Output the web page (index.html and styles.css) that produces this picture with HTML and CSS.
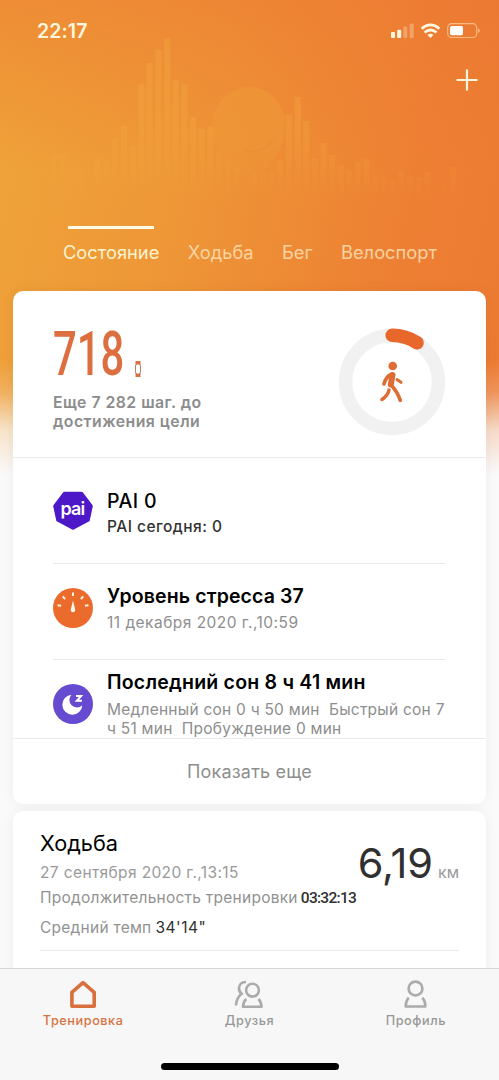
FILE: index.html
```html
<!DOCTYPE html>
<html lang="ru">
<head>
<meta charset="utf-8">
<title>Тренировка</title>
<link rel="stylesheet" href="styles.css">
</head>
<body>
<div class="app">
  <svg class="wave" width="499" height="291" viewBox="0 0 499 291" aria-hidden="true">
    <defs>
      <linearGradient id="fade" gradientUnits="userSpaceOnUse" x1="0" y1="36" x2="0" y2="198">
        <stop offset="0" stop-color="#f2a83e" stop-opacity=".42"/>
        <stop offset=".6" stop-color="#f2a83e" stop-opacity=".34"/>
        <stop offset="1" stop-color="#f2a83e" stop-opacity="0"/>
      </linearGradient>
      <linearGradient id="disc" x1="0" y1="0" x2="0" y2="1">
        <stop offset="0" stop-color="#ee9a37" stop-opacity=".55"/>
        <stop offset=".55" stop-color="#ee9a37" stop-opacity=".5"/>
        <stop offset="1" stop-color="#ee9a37" stop-opacity="0"/>
      </linearGradient>
    </defs>
    <path d="M213 123a36 36 0 0 1 72 0c0 25-12 44-36 62-24-18-36-37-36-62z" fill="url(#disc)"/>
    <path d="M244 151q16 4 31-12" fill="none" stroke="#de8a34" stroke-opacity=".3" stroke-width="1.500"/>
    <path stroke="url(#fade)" stroke-width="6.2" d="M54 154V198M62.500 154V198M80 168V198M97.500 158V198M106 160V198M115 139V198M124 126V198M133 146V198M141.500 84V198M149.500 63V198M158.500 50V198M167.300 38V198M175.500 80V198M184.300 84V198M193 117V198M202 129V198M210.300 126V198M219 152V198M228 161V198M236.500 168V198M254 173V198M263 172V198M271.500 172V198M280 160V198M289 115V198M297.700 97V198M306.200 121V198M315 158V198M323.500 143V198M332 155V198M341 165V198M349.500 171V198M358 162V198M366.500 159V198M375 176V198M384 178V198M392.500 180V198M401 171V198M410 175V198M419 177V198M427.500 172V198M444 184V198M453 167V198"/>
  </svg>

  <header class="header">
    <div class="status">
      <span class="time">22:17</span>
      <svg class="status-icons" width="91" height="18" viewBox="0 0 91 18">
        <g fill="#fff8df">
          <rect x="0" y="10" width="4" height="6" rx="1"/>
          <rect x="6.200" y="7.700" width="4" height="8.300" rx="1"/>
          <g opacity=".3"><rect x="12.300" y="4.500" width="4" height="11.500" rx="1"/><rect x="18.700" y="1.500" width="4" height="14.500" rx="1"/></g>
          <path d="M39.500 16l-3-3q3-2.600 6 0z"/>
        </g>
        <g fill="none" stroke="#fff8df" stroke-width="2.700">
          <path d="M33.500 10.500q6-5 12 0"/><path d="M30.600 6.700q8.900-7.600 17.800 0"/>
        </g>
        <rect x="56.700" y="1.700" width="29" height="13.800" rx="4" fill="none" stroke="#fdd39a" stroke-opacity=".75" stroke-width="1.200"/>
        <rect x="59" y="4" width="13" height="9.300" rx="1.800" fill="#fff"/>
        <path d="M87.200 6.300q3.300 2.200 0 4.600z" fill="#fdd39a" fill-opacity=".75"/>
      </svg>
    </div>
    <svg class="plus" width="22" height="22" viewBox="0 0 22 22"><path d="M11 .5v21M.5 11h21" stroke="#fff8df" stroke-width="2.200"/></svg>
    <nav class="tabs">
      <span class="tab tab-on">Состояние</span>
      <span class="tab">Ходьба</span>
      <span class="tab">Бег</span>
      <span class="tab">Велоспорт</span>
    </nav>
  </header>

  <main class="feed">
    <section class="card">
      <div class="steps">
        <div>
          <div class="count"><span class="count-num">718</span>
            <svg width="6" height="16" viewBox="0 0 6 16"><path fill="#dd7040" d="M.5 0h5v16h-5z"/><rect x=".5" y="3" width="5" height="10" rx="2" fill="#fff" stroke="#bd8060"/></svg>
          </div>
          <p class="goal">Еще 7 282 шаг. до<br>достижения цели</p>
        </div>
        <svg class="ring" width="108" height="108" viewBox="0 0 108 108">
          <circle cx="54" cy="54" r="46.500" fill="none" stroke="#f1f1f1" stroke-width="13.400"/>
          <path d="M54.200 7.300A46.500 46.500 0 0 1 79 14.700" fill="none" stroke="#e8682c" stroke-width="13.600" stroke-linecap="round"/>
          <circle cx="54.700" cy="38" r="4.300" fill="#de6c35"/>
          <g fill="none" stroke="#de6c35" stroke-linecap="round" stroke-linejoin="round">
            <path d="M53.500 46.200q-5.500 2-7.500 9.800" stroke-width="3.600"/>
            <path d="M54.500 47L52.800 56.500" stroke-width="6"/>
            <path d="M53 57Q59 63 62.300 72.300" stroke-width="3.700"/>
            <path d="M51 62Q50 67.500 44 71.500" stroke-width="3.500"/>
            <path d="M59 51.500l4 2.800" stroke-width="3"/>
          </g>
        </svg>
      </div>

      <div class="row row-pai">
        <svg class="badge" width="40" height="40" viewBox="0 0 40 40">
          <path d="M11.500 2.500h17L38 15l-3 14L20 37 5 29 2 15z" fill="#4d18c7" stroke="#4d18c7" stroke-width="3.600" stroke-linejoin="round"/>
          <text x="19.500" y="23.500" class="pai">pai</text>
        </svg>
        <div class="info"><h2 class="title t-pai">PAI 0</h2><p class="sub sub-dark">PAI сегодня: 0</p></div>
      </div>

      <div class="row row-stress">
        <svg class="badge" width="40" height="40" viewBox="0 0 40 40">
          <circle cx="20" cy="20" r="20" fill="#ea6b2c"/>
          <path d="M20 4.500v3.500M9.800 8.300l2.300 2.800M30.200 8.300l-2.300 2.800M4.500 17.200l3.600.6M35.500 17.200l-3.600.6" stroke="#fff1dc" stroke-width="2"/>
          <path d="M20 12.500l2.200 8.800a2.300 2.300 0 1 1-4.400 0z" fill="#fff8ea"/>
        </svg>
        <div class="info"><h2 class="title t-stress">Уровень стресса 37</h2><p class="sub sub-stress">11 декабря 2020 г.,10:59</p></div>
      </div>

      <div class="row row-sleep">
        <svg class="badge" width="40" height="40" viewBox="0 0 40 40">
          <circle cx="20" cy="20" r="20" fill="#664acf"/>
          <path d="M18.500 10.700a7 7 0 0 0 10.800 10.500A10 10 0 1 1 18.500 10.700z" fill="#fff"/>
          <path d="M23 12h5.200l-4.400 4.800h5.200" fill="none" stroke="#fff" stroke-width="1.900"/>
        </svg>
        <div class="info"><h2 class="title t-sleep">Последний сон 8 ч 41 мин</h2><p class="sub sub-sleep">Медленный сон 0 ч 50 мин&nbsp; Быстрый сон 7<br>ч 51 мин&nbsp; Пробуждение 0 мин</p></div>
      </div>
      <div class="more">Показать еще</div>
    </section>

    <section class="card walk">
      <div class="walk-body">
        <div class="walk-top">
          <div><h2 class="walk-title">Ходьба</h2><p class="walk-date">27 сентября 2020 г.,13:15</p></div>
          <div class="distance"><span class="km-num">6,19</span><span class="km">км</span></div>
        </div>
        <p class="walk-line"><span>Продолжительность тренировки</span><span class="duration">03:32:13</span></p>
        <p class="walk-line walk-pace"><span>Средний темп</span><span class="pace">34'14"</span></p>
      </div>
    </section>
  </main>

  <footer class="bottom">
    <nav class="nav">
      <div class="nav-item nav-on">
        <svg width="28" height="30" viewBox="0 0 28 30"><path d="M2.900 13.300L14 3.700l11.200 9.600v13.900H2.900z" fill="none" stroke="#d96f3d" stroke-width="3.600" stroke-linejoin="round"/></svg>
        <span class="nav-label l-train">Тренировка</span>
      </div>
      <div class="nav-item">
        <svg width="30" height="30" viewBox="0 0 30 30" fill="none" stroke="#ababab" stroke-width="2.600">
          <circle cx="18.500" cy="11.200" r="6.400"/>
          <path d="M12.200 20q-3 3-3.200 7.700h18.500q-.2-4.700-3-7.700" stroke-linejoin="round"/>
          <path d="M12 3q-6-.2-7 5.500-.3 4 2.600 6.300Q2.300 19 2 26.500"/>
        </svg>
        <span class="nav-label l-friends">Друзья</span>
      </div>
      <div class="nav-item">
        <svg width="28" height="30" viewBox="0 0 28 30" fill="none" stroke="#ababab" stroke-width="2.700">
          <circle cx="13.500" cy="9.500" r="6.900"/>
          <path d="M6.800 18.700q-3 3-3 8.800h19.500q0-5.800-3-8.800" stroke-linejoin="round"/>
        </svg>
        <span class="nav-label l-profile">Профиль</span>
      </div>
    </nav>
    <div class="home-bar"></div>
  </footer>
</div>
</body>
</html>
```
FILE: styles.css
```css
* { box-sizing: border-box; }
body { margin: 0; font-family: Inter, "Liberation Sans", sans-serif; color: #000; }
h2, p { margin: 0; font-weight: 400; white-space: nowrap; }
svg { display: block; flex: none; }

.app {
  position: relative;
  display: flex;
  flex-direction: column;
  height: 1080px;
  overflow: hidden;
  background:
    linear-gradient(to bottom, rgba(250,250,250,0) 360px, rgba(250,250,250,.2) 392px, rgba(250,250,250,.75) 430px, #fafafa 475px),
    linear-gradient(103deg, #efa439 2%, #ee9637 38%, #ed7f33 75%, #ec7a32 100%) top / 100% 480px no-repeat,
    #fafafa;
}
.app::before {
  content: "";
  position: absolute;
  inset: 0 0 auto;
  height: 170px;
  background: linear-gradient(to bottom, rgba(237,118,50,.5), rgba(237,118,50,0));
}
.wave { position: absolute; left: 0; top: 0; }

.header { position: relative; display: flex; flex-direction: column; height: 291px; flex: none; }
.status { display: flex; justify-content: space-between; padding: 22px 17px 0 37px; height: 69px; }
.time { font-size: 19.5px; line-height: 18px; font-weight: 600; letter-spacing: .1px; color: #fff8df; }
.plus { align-self: flex-end; margin-right: 21px; }
.tabs { display: flex; gap: 28.5px; padding: 0 63px; margin-top: 135px; color: #fad3a0; font-size: 18.3px; white-space: nowrap; }
.tab { position: relative; padding-top: 15px; line-height: 22px; }
.tab-on { color: #fff3cf; }
.tab-on::before { content: ""; position: absolute; left: 5px; top: 0; width: 86px; height: 3px; background: #fffbe9; }

.feed { position: relative; display: flex; flex-direction: column; gap: 7px; width: 473px; margin-left: 13px; }
.card { background: #fff; border-radius: 10px; box-shadow: 0 0 14px rgba(0,0,0,.055); flex: none; }
.steps { display: flex; justify-content: space-between; height: 167px; padding: 36px 40px 0 40px; border-bottom: 1px solid #ebebeb; }
.ring { margin-top: 1px; }
.count { display: flex; align-items: flex-end; height: 50px; }
.count-num { width: 82px; padding-top: 2px; font-family: Roboto, sans-serif; font-size: 61.5px; font-weight: 500; line-height: 46px; color: #dd6e40; transform: scaleX(.68); transform-origin: left; }
.goal { margin-top: 16px; font-size: 15.8px; line-height: 19px; font-weight: 600; letter-spacing: .48px; color: #8c8c8c; }

.row { display: flex; gap: 14px; margin: 0 41px 0 40px; border-bottom: 1px solid #ebebeb; }
.row-pai { height: 106px; padding-top: 31px; }
.row-stress { height: 96px; padding-top: 20px; }
.row-sleep { height: 78px; padding-top: 10px; border: 0; }
.badge { margin-top: 2px; }
.row-stress .badge { margin-top: 4px; }
.row-sleep .badge { margin-top: 14px; }
.pai { font: 600 18px Inter, sans-serif; fill: #fff; text-anchor: middle; letter-spacing: -.9px; }
.title { font-size: 19.5px; line-height: 24px; font-weight: 600; letter-spacing: .12px; }
.t-pai { font-weight: 500; letter-spacing: .4px; }
.t-sleep { letter-spacing: .22px; }
.sub { margin-top: 4px; font-size: 15.5px; line-height: 19px; color: #8e8e8e; letter-spacing: .47px; }
.sub-dark { color: #333; font-weight: 500; }
.sub-stress { margin-top: 5px; }
.sub-sleep { margin-top: 6px; letter-spacing: .24px; }
.more { height: 66px; border-top: 1px solid #ebebeb; text-align: center; font-size: 18px; line-height: 65px; color: #8e8e8e; letter-spacing: .2px; }

.walk { height: 190px; padding: 0 27px; }
.walk-body { height: 140px; padding-top: 19px; border-bottom: 1px solid #ebebeb; }
.walk-top { display: flex; justify-content: space-between; height: 53px; }
.walk-title { font-size: 21.7px; line-height: 26px; }
.walk-date { margin-top: 7px; font-size: 15.5px; line-height: 20px; letter-spacing: .38px; color: #9a9a9a; }
.distance { display: flex; align-items: baseline; gap: 5px; padding-top: 8px; line-height: 50px; color: #303030; }
.km-num { font-size: 41.5px; }
.km { font-size: 16px; color: #999; }
.walk-line { display: flex; gap: 3px; margin-top: 5px; font-size: 15.5px; line-height: 20px; letter-spacing: .25px; color: #929292; }
.walk-pace { gap: 4px; margin-top: 10px; }
.duration { font-family: Roboto, sans-serif; font-weight: 500; color: #303030; letter-spacing: -.7px; }
.pace { color: #303030; letter-spacing: .5px; }

.bottom { position: absolute; left: 0; right: 0; bottom: 0; height: 112px; background: #f7f7f7; border-top: 1px solid #d5d5d5; }
.nav { display: grid; grid-template-columns: repeat(3, 1fr); padding-top: 10px; }
.nav-item { display: flex; flex-direction: column; align-items: center; color: #979797; }
.nav-label { margin-top: 3px; font-size: 12.7px; line-height: 18px; letter-spacing: .55px; font-weight: 500; }
.nav-on { color: #d8733f; }
.home-bar { width: 178px; height: 7px; margin: 33px auto 0; border-radius: 4px; background: #000; }
```
